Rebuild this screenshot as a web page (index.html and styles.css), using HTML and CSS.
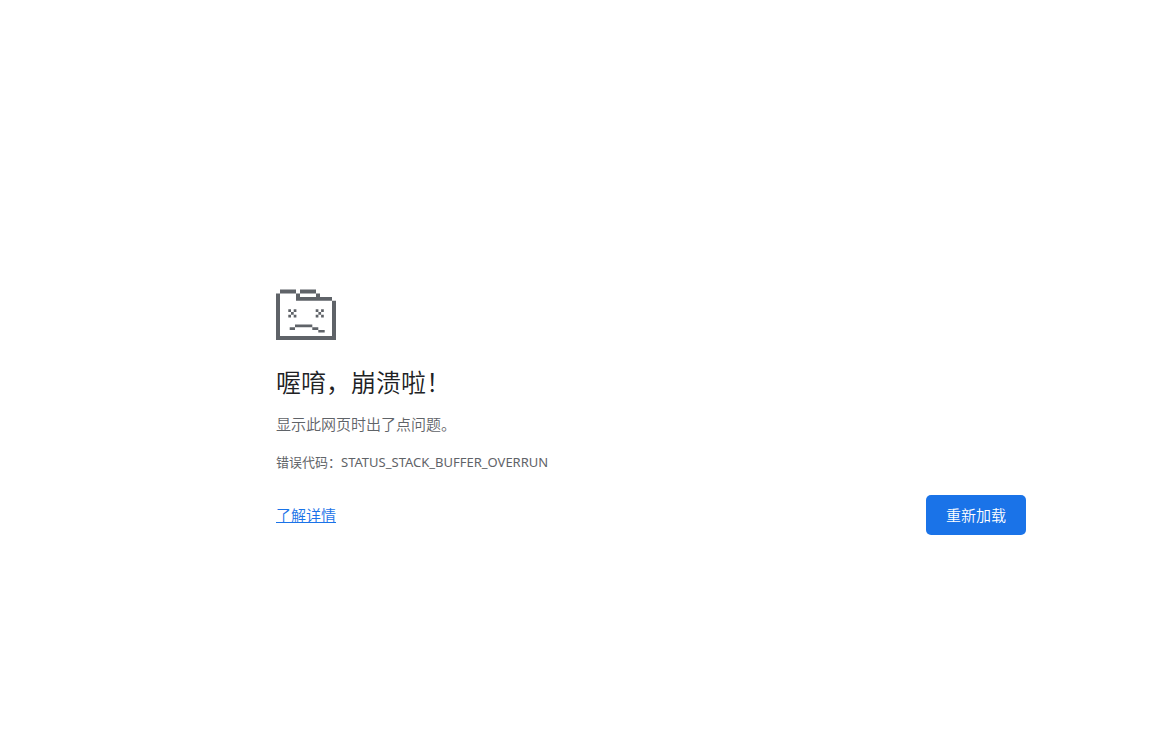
FILE: index.html
```html
<!doctype html>
<html lang="zh-CN">
  <head>
    <meta charset="UTF-8" />
    <meta name="viewport" content="width=device-width, initial-scale=1.0" />
    <title>喔唷，崩溃啦！</title>
    <link rel="stylesheet" href="styles.css">
  </head>
  <body>
    <main class="sad-tab">
      <svg class="sad-icon" viewBox="0 0 60 51" aria-hidden="true">
        <!-- folder -->
        <path d="M4 .6H20V4.4H4zM24 .6H40V4.4H24zM20 4.4H24V8H20zM40 4.4H44V8H40zM20 8H56V11.8H20zM56 11.8H60V51H56zM0 4.4H4V51H0zM4 47H56V51H4z" />
        <!-- eyes -->
        <path d="M12.3 20.3h2.7v2.7h-2.7zM17.7 20.3h2.7v2.7h-2.7zM15 23h2.7v2.7h-2.7zM12.3 25.7h2.7v2.7h-2.7zM17.7 25.7h2.7v2.7h-2.7z" />
        <path d="M39.7 20.3h2.7v2.7h-2.7zM45.1 20.3h2.7v2.7h-2.7zM42.4 23h2.7v2.7h-2.7zM39.7 25.7h2.7v2.7h-2.7zM45.1 25.7h2.7v2.7h-2.7z" />
        <!-- mouth -->
        <path d="M19 35.6h17.3v2.7H19zM13.7 38.3H19V41h-5.3zM36.3 38.3h6V41h-6zM42.3 41h6.4v2.6h-6.4z" />
      </svg>
      <h1>喔唷，崩溃啦！</h1>
      <p class="message">显示此网页时出了点问题。</p>
      <p class="error-code">错误代码：STATUS_STACK_BUFFER_OVERRUN</p>
      <div class="actions">
        <a href="#">了解详情</a>
        <button type="button">重新加载</button>
      </div>
    </main>
  </body>
</html>
```

FILE: styles.css
```css
body {
  margin: 0;
  padding: 289px 126px 0 276px;
  background-color: #ffffff;
  color: #5f6368;
  font-family: 'Noto Sans', 'Noto Sans CJK SC', sans-serif;
  font-size: 15px;
  font-weight: 350;
  line-height: 22px;
}
.sad-tab {
  max-width: 750px;
}
.sad-icon {
  display: block;
  width: 60px;
  height: 51px;
  fill: #5f6368;
}
h1 {
  margin: 24px 0 13px;
  color: #202124;
  font-size: 25px;
  font-weight: inherit;
  line-height: 36px;
}
p {
  margin: 0;
}
.error-code {
  margin-top: 17px;
  font-size: 13px;
  font-weight: normal;
  line-height: 20px;
}
.actions {
  display: flex;
  justify-content: space-between;
  align-items: center;
  margin-top: 23px;
}
a {
  color: #1a73e8;
}
button {
  height: 40px;
  padding: 0 20px;
  border: none;
  border-radius: 5px;
  background-color: #1a73e8;
  color: #ffffff;
  font: inherit;
  cursor: pointer;
}
```
